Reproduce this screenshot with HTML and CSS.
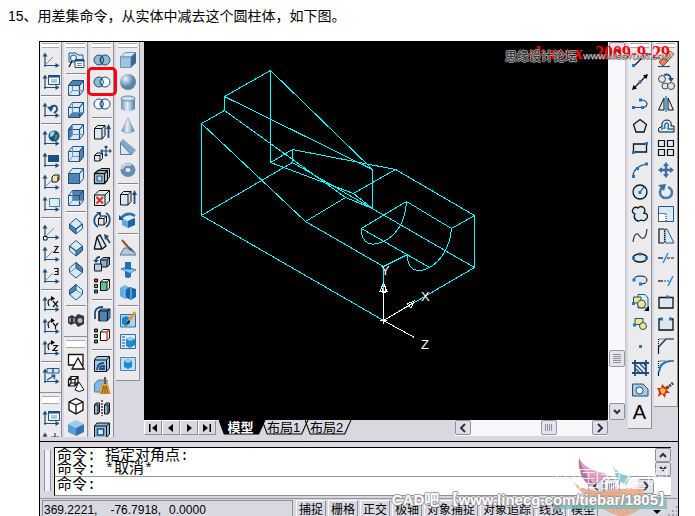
FILE: index.html
```html
<!DOCTYPE html>
<html lang="zh-CN">
<head>
<meta charset="utf-8">
<title>差集命令</title>
<link rel="stylesheet" href="styles.css">
</head>
<body>
<svg class="defs" aria-hidden="true">
  <symbol id="axes" viewBox="0 0 20 20"><path class="n" d="M4 17V5M3 15.500H16"/><path class="nf" d="M4 2.500L6.500 6.500H1.500ZM18.500 15.500L14.500 13V18Z"/></symbol>
  <symbol id="ucs" viewBox="0 0 20 20"><use href="#axes"/><path class="s" d="M5 14L12 7"/></symbol>
  <symbol id="ucs-dialog" viewBox="0 0 20 20"><use href="#axes"/><path fill="#f4f9fc" stroke="#1d4e7e" d="M7.500 3.500H18.500V12.500H7.500Z"/><path class="nf" d="M7 3H19V5.500H7Z"/><path class="s" d="M10 8H16M10 10H16"/></symbol>
  <symbol id="ucs-prev" viewBox="0 0 20 20"><use href="#axes"/><path class="n2" d="M9 9C11 4 17 5 16 10C15 12 14 12 13 13"/><path class="nf" d="M6 7L13 6L10 12Z"/></symbol>
  <symbol id="ucs-world" viewBox="0 0 20 20"><use href="#axes"/><circle class="nf" cx="13" cy="8" r="5.500"/><path fill="#8fd0f4" d="M9 5Q11 2 14 4L12 8L9 9Z"/><path fill="#3a9c52" d="M14 7L17 6L16 11L13 12Z"/></symbol>
  <symbol id="ucs-object" viewBox="0 0 20 20"><use href="#axes"/><path class="nf" d="M7 5H18V12H7Z"/></symbol>
  <symbol id="ucs-face" viewBox="0 0 20 20"><use href="#axes"/><path class="s" d="M5 14L10 9"/><path fill="#f1e5ae" stroke="#111" d="M11 5L13 3H18V8L16 10H11Z"/><path fill="#645b35" d="M16 5L18 3V8L16 10Z"/></symbol>
  <symbol id="ucs-view" viewBox="0 0 20 20"><use href="#axes"/><path fill="#dceef8" stroke="#4c7ba8" d="M8.500 4.500H18.500V12.500H8.500Z"/></symbol>
  <symbol id="ucs-origin" viewBox="0 0 20 20"><use href="#axes"/><path class="s" d="M5 14L13 6"/><path fill="#fff" stroke="#111" d="M2.500 14.500H6V18H2.500Z"/></symbol>
  <symbol id="ucs-z" viewBox="0 0 20 20"><use href="#axes"/><path class="s" d="M5 14L12 7"/><path class="k" d="M13 2.500H17L13 8.500H18"/></symbol>
  <symbol id="ucs-3" viewBox="0 0 20 20"><use href="#axes"/><path class="s" d="M5 14L12 7"/><path class="k" d="M13 2.500H17V8.500H13M14 5.500H17"/></symbol>
  <symbol id="rot" viewBox="0 0 20 20"><use href="#axes"/><path class="k" d="M8 12C6 8 7 5 11 4.500"/><path d="M10 2L14 4.500L10 7Z"/></symbol>
  <symbol id="ucs-rx" viewBox="0 0 20 20"><use href="#rot"/><path class="k" d="M12 7L17 13M17 7L12 13"/></symbol>
  <symbol id="ucs-ry" viewBox="0 0 20 20"><use href="#rot"/><path class="k" d="M12 7L14.500 10L17 7M14.500 10V13"/></symbol>
  <symbol id="ucs-rz" viewBox="0 0 20 20"><use href="#rot"/><path class="k" d="M12 7.500H16.500L12 12.500H17"/></symbol>
  <symbol id="ucs-apply" viewBox="0 0 20 20"><use href="#axes"/><path class="lf" d="M6 2.500H12V7H6ZM12 2.500H18V7H12Z"/><path class="n" d="M6 14L14 9M14 9L10 9M14 9L13 13"/></symbol>
  <symbol id="ucs-move" viewBox="0 0 20 20"><use href="#axes"/><path class="n" d="M14 3V11M10 7H18"/></symbol>

  <symbol id="views" viewBox="0 0 20 20"><path class="lf" d="M3 3H10L12 5H17V12H3Z"/><path class="k" d="M3 17L6 11"/><circle fill="#eef6fb" stroke="#1d4e7e" cx="7.500" cy="8" r="3"/><path fill="#fff" stroke="#1d4e7e" d="M9 9.500H18V17.500H9Z"/><path class="nf" d="M9 9H18V11.500H9Z"/><path class="s" d="M11 13.500H16M11 15.500H16"/></symbol>
  <symbol id="cube" viewBox="0 0 20 20"><path class="lf" d="M2.500 7.500L6.500 2.500H17.500V12.500L13.500 17.500H2.500Z"/></symbol>
  <symbol id="wire" viewBox="0 0 20 20"><path class="n" d="M2.500 7.500H13.500V17.500M13.500 7.500L17.500 2.500"/><path class="s" d="M6.500 2.500V12.500H17.500M6.500 12.500L2.500 17.500"/></symbol>
  <symbol id="v-top" viewBox="0 0 20 20"><use href="#cube"/><use href="#wire"/><path class="df" d="M2.500 7.500L6.500 2.500H17.500L13.500 7.500Z"/></symbol>
  <symbol id="v-bottom" viewBox="0 0 20 20"><use href="#cube"/><path class="df" d="M2.500 17.500L6.500 12.500H17.500L13.500 17.500Z"/><use href="#wire"/></symbol>
  <symbol id="v-left" viewBox="0 0 20 20"><use href="#cube"/><path class="df" d="M2.500 7.500L6.500 2.500V12.500L2.500 17.500Z"/><use href="#wire"/></symbol>
  <symbol id="v-right" viewBox="0 0 20 20"><use href="#cube"/><use href="#wire"/><path class="df" d="M13.500 7.500L17.500 2.500V12.500L13.500 17.500Z"/></symbol>
  <symbol id="v-front" viewBox="0 0 20 20"><use href="#cube"/><path class="df" d="M2.500 7.500H13.500V17.500H2.500Z"/><path class="n" d="M13.500 7.500L17.500 2.500"/></symbol>
  <symbol id="v-back" viewBox="0 0 20 20"><use href="#cube"/><path class="df" d="M6.500 2.500H17.500V12.500H6.500Z"/><use href="#wire"/></symbol>
  <symbol id="iso" viewBox="0 0 20 20"><path class="lf" d="M10 2.500L16.500 8V12.500L10 18L3.500 12.500V8Z"/></symbol>
  <symbol id="iso-sw" viewBox="0 0 20 20"><use href="#iso"/><path class="df" d="M3.500 8L10 13V18L3.500 12.500Z"/><path class="n" d="M10 13L16.500 8"/></symbol>
  <symbol id="iso-se" viewBox="0 0 20 20"><use href="#iso"/><path class="df" d="M16.500 8L10 13V18L16.500 12.500Z"/><path class="n" d="M10 13L3.500 8"/></symbol>
  <symbol id="iso-ne" viewBox="0 0 20 20"><use href="#iso"/><path class="df" d="M10 2.500L16.500 8V12.500L10 8Z"/><path class="s" d="M10 8L3.500 12.500"/></symbol>
  <symbol id="iso-nw" viewBox="0 0 20 20"><use href="#iso"/><path class="df" d="M10 2.500L3.500 8V12.500L10 8Z"/><path class="s" d="M10 8L16.500 12.500"/></symbol>
  <symbol id="camera" viewBox="0 0 20 20"><path fill="#33373d" d="M2 7L6 5L9 7L12 4L18 6V14L12 17L9 13L5 15L2 13Z"/><circle fill="#a9b9c8" cx="14" cy="10.500" r="2.500"/><path stroke="#dfe5ea" d="M4 8V12M8 8V12"/></symbol>
  <symbol id="wf2d" viewBox="0 0 20 20"><path fill="#fff" stroke="#111" stroke-width="1.300" d="M2.500 2.500H17V13H2.500Z"/><path fill="#fff" stroke="#111" stroke-width="1.300" d="M12 6L18 17H6Z"/></symbol>
  <symbol id="wf3d" viewBox="0 0 20 20"><path class="k" d="M2.500 5.500L5 2.500H12V9L9 12H2.500ZM2.500 5.500H9V12M9 5.500L12 2.500M5 2.500V9H12M5 9L2.500 12"/><path fill="#fff" stroke="#111" d="M13 8L18 16Q13 19 9 16Z"/></symbol>
  <symbol id="hidden" viewBox="0 0 20 20"><path fill="#fff" stroke="#111" stroke-width="1.300" d="M10 2.500L17 6V14L10 18L3 14V6ZM3 6L10 9L17 6M10 9V18"/></symbol>
  <symbol id="shade" viewBox="0 0 20 20"><path fill="#9bcbee" d="M10 2L18 6L10 10L2 6Z"/><path fill="#5a9bd0" d="M2 6L10 10V18L2 14Z"/><path fill="#3474ac" d="M18 6L10 10V18L18 14Z"/></symbol>

  <symbol id="union" viewBox="0 0 20 20"><circle class="mf" cx="7" cy="10" r="5"/><circle class="mf" cx="13" cy="10" r="5"/><path class="n" d="M10 6Q7 10 10 14Q13 10 10 6"/></symbol>
  <symbol id="subtract" viewBox="0 0 20 20"><circle class="mf" cx="7" cy="10" r="5"/><circle fill="#fff" stroke="#1d4e7e" cx="13" cy="10" r="5"/><path class="lf" d="M10 6Q7 10 10 14Q13 10 10 6"/></symbol>
  <symbol id="intersect" viewBox="0 0 20 20"><circle fill="#fff" stroke="#1d4e7e" cx="7" cy="10" r="5"/><circle fill="#fff" stroke="#1d4e7e" cx="13" cy="10" r="5"/><path class="mf" d="M10 6Q7 10 10 14Q13 10 10 6"/></symbol>
  <symbol id="kcube" viewBox="0 0 20 20"><path class="kf" d="M2.500 6.500L5.500 3.500H13V13.500L10 17H2.500ZM2.500 6.500H10V17M10 6.500L13 3.500"/></symbol>
  <symbol id="ext" viewBox="0 0 20 20"><use href="#kcube"/><path class="n2" d="M16.500 16V6"/><path class="nf" d="M16.500 2L19 7H14Z"/></symbol>
  <symbol id="movef" viewBox="0 0 20 20"><path class="kf" d="M2.500 11.500L5 9H10.500V14.500L8 17H2.500ZM2.500 11.500H8V17M8 11.500L10.500 9"/><path class="n" d="M14 2V12M9 7H19M12.500 3.500L14 2L15.500 3.500M12.500 10.500L14 12L15.500 10.500M10.500 5.500L9 7L10.500 8.500M17.500 5.500L19 7L17.500 8.500"/></symbol>
  <symbol id="offsetf" viewBox="0 0 20 20"><path class="kf" d="M6.500 5L9 2.500H17.500V11L15 13.500H6.500Z"/><path fill="#c2d9ea" stroke="#111" stroke-width="1.300" d="M2.500 7.500H12.500V17.500H2.500ZM12.500 7.500L15.500 4.500V14L12.500 17.500M2.500 7.500L6 4.500H15.500"/><path class="n" d="M5 10H10V15H5Z"/></symbol>
  <symbol id="delf" viewBox="0 0 20 20"><path class="kf" d="M2.500 7L7 2.500H17.500V13L13 17.500H2.500ZM2.500 7H13V17.500M13 7L17.500 2.500"/><path stroke="#e02b16" stroke-width="2" d="M4.500 9L11 15.500M11 9L4.500 15.500"/></symbol>
  <symbol id="rotf" viewBox="0 0 20 20"><path class="kf" d="M6.500 8.500L9 6H14.500V12L12 15H6.500ZM6.500 8.500H12V15M12 8.500L14.500 6"/><path class="n2" d="M6 17C1 14 1 7 6 4M14 3C19 6 19 13 14 17"/><path class="nf" d="M4 2H9V7Z"/></symbol>
  <symbol id="taper" viewBox="0 0 20 20"><path class="kf" stroke-width="1.300" d="M2.500 16L5 5L8 3L14 14L10 17H2.500ZM5 5L10 17"/><path class="n2" d="M18 11L14 5"/><path class="nf" d="M12 2L17 4L13 8Z"/></symbol>
  <symbol id="copyf" viewBox="0 0 20 20"><path fill="#88acd0" stroke="#111" d="M8.500 6L11 3.500H17.500V11L15 13H8.500ZM8.500 6H15V13M15 6L17.500 3.500"/><path fill="#b5d0e7" stroke="#111" d="M2.500 10H9.500V17H2.500Z"/><path class="n2" d="M4 7Q4 3 8 3"/><path class="nf" d="M1 6H7L4 9Z"/></symbol>
  <symbol id="colorf" viewBox="0 0 20 20"><path fill="#e23b28" stroke="#111" d="M2.500 3H5.500V6H2.500Z"/><path fill="#48d37a" stroke="#111" d="M2.500 8.500H5.500V11.500H2.500Z"/><path fill="#258bd8" stroke="#111" d="M2.500 14H5.500V17H2.500Z"/><path fill="#e4f1ea" stroke="#111" d="M8.500 6L11 3.500H17.500V12L15 14.500H8.500ZM15 6L17.500 3.500"/><path fill="#5fc48c" stroke="#111" d="M8.500 6H15V14.500H8.500Z"/></symbol>
  <symbol id="copye" viewBox="0 0 20 20"><path class="df" d="M7 7L9 5H18V14L15 17H7Z"/><path class="k" d="M7 7H15.500V17M15.500 7L18 5M7 7V17"/><path class="n2" d="M3 15V8Q4 3 11 3"/></symbol>
  <symbol id="colore" viewBox="0 0 20 20"><path fill="#e23b28" stroke="#111" d="M2.500 3H5.500V6H2.500Z"/><path fill="#48d37a" stroke="#111" d="M2.500 8.500H5.500V11.500H2.500Z"/><path fill="#258bd8" stroke="#111" d="M2.500 14H5.500V17H2.500Z"/><path fill="#fff" stroke="#111" d="M8.500 6L11 3.500H17.500V12L15 14.500H8.500ZM8.500 6H15"/><path stroke="#e23b28" stroke-width="1.500" d="M15 6V14.500M15 6L17.500 3.500"/></symbol>
  <symbol id="imprint" viewBox="0 0 20 20"><path fill="#9fcbea" stroke="#111" d="M2.500 6L5 2.500H17.500V14L14.500 17.500H2.500ZM2.500 6H14.500V17.500M14.500 6L17.500 2.500"/><path class="n2" d="M5 16Q5 9 12 9M8 14Q8 12 12 12V15H8Z"/></symbol>
  <symbol id="clean" viewBox="0 0 20 20"><path fill="#82b8e2" stroke="#4c7ba8" d="M2.500 8L6 4H15V16H2.500Z"/><path fill="#8a5421" d="M12 1H14V8H12Z"/><path fill="#e0a23c" d="M10 8H16L19 18H7Z"/><path stroke="#7b491d" d="M11.500 10L10 18M13 10V18M14.500 10L16 18"/></symbol>
  <symbol id="separate" viewBox="0 0 20 20"><path fill="#8fb4d4" stroke="#111" d="M2.500 7L4 5H7.500V14L6 16H2.500ZM12.500 7L14 5H17.500V14L16 16H12.500ZM2.500 7H6V16M12.500 7H16V16"/><path class="k" stroke-dasharray="2 1" d="M10 2V18"/></symbol>
  <symbol id="shell" viewBox="0 0 20 20"><path fill="#8dbadd" stroke="#111" d="M2.500 6L5 3H17.500V14L14.500 17.500H2.500ZM2.500 6H14.500V17.500M14.500 6L17.500 3"/><path fill="#e6f2fa" stroke="#1d4e7e" stroke-width="1.500" d="M5.500 9H11.500V15H5.500Z"/></symbol>

  <linearGradient id="steel"><stop offset="0" stop-color="#6d93b4"/><stop offset=".45" stop-color="#e3f1fa"/><stop offset="1" stop-color="#577d9f"/></linearGradient>
  <radialGradient id="ballfill" cx=".35" cy=".3"><stop offset="0" stop-color="#edf5fb"/><stop offset="1" stop-color="#5784aa"/></radialGradient>
  <symbol id="box" viewBox="0 0 20 20"><path fill="#cfe6f5" stroke="#6a93b5" d="M2.500 7L7 2.500H17.500L13 7Z"/><path fill="#9dc3de" stroke="#6a93b5" d="M2.500 7H13V17.500H2.500Z"/><path fill="#3c6790" d="M13 7L18 2.500V13L13 17.500Z"/></symbol>
  <symbol id="sphere" viewBox="0 0 20 20"><circle fill="url(#ballfill)" cx="10" cy="10" r="8"/></symbol>
  <symbol id="cylinder" viewBox="0 0 20 20"><path fill="url(#steel)" d="M3 4V15Q10 20 17 15V4Z"/><ellipse fill="#c7dfef" stroke="#66859f" cx="10" cy="4.500" rx="7" ry="2.500"/></symbol>
  <symbol id="cone" viewBox="0 0 20 20"><path fill="url(#steel)" stroke="#66859f" stroke-width=".5" d="M10 2L16.500 15Q10 19 3.500 15Z"/></symbol>
  <symbol id="wedge" viewBox="0 0 20 20"><path fill="#81a8c8" d="M2 4L5 1L18 12L14 17H2Z"/><path fill="#d5e8f4" stroke="#557a9a" d="M2.500 5L13 16.500H2.500Z"/></symbol>
  <symbol id="torus" viewBox="0 0 20 20"><ellipse fill="none" stroke="#668eb2" stroke-width="5" cx="10" cy="10" rx="5" ry="4.500"/><path stroke="#c9dfef" stroke-width="2" fill="none" d="M4 9Q6 3 13 5"/></symbol>
  <symbol id="revolve" viewBox="0 0 20 20"><path fill="#5ca9df" d="M4 9L10 11L16 8V15L10 18L4 15Z"/><path fill="#1c64b0" d="M10 11L17 8V15L10 18Z"/><path fill="none" stroke="#2577b8" stroke-width="2.500" d="M3 8Q10 1 17 6"/><path class="nf" d="M1 5V10H6Z"/></symbol>
  <symbol id="slice" viewBox="0 0 20 20"><path fill="#b1c9da" stroke="#557996" d="M2 17L6 10H13L18 17Z"/><path stroke="#a24835" stroke-width="2" d="M4 2L10 9"/><path fill="#4a5565" d="M9 7L18 15L11 12Z"/></symbol>
  <symbol id="section" viewBox="0 0 20 20"><path fill="#6ca9d9" stroke="#3973a4" d="M3 9L9 7L18 10L12 13Z"/><path fill="#1d72ba" d="M7 2H13V17Q10 19 7 17Z"/><path fill="#80c7ef" d="M3 9L18 10L12 13Z"/></symbol>
  <symbol id="interfere" viewBox="0 0 20 20"><path fill="#62ace0" d="M2 6L7 3L12 6V15L7 17L2 14Z"/><path fill="#1668ad" d="M7 8L12 5L18 7V15L13 18L7 15Z"/><path stroke="#9bd2f3" d="M7 3V16M13 6V17"/></symbol>
  <symbol id="drawset" viewBox="0 0 20 20"><path fill="#a6d5f2" stroke="#386b98" d="M2.500 4.500H17.500V17H2.500Z"/><path fill="#1982cf" d="M4 8L8 6L12 8V14L8 16L4 14Z"/><path stroke="#e19732" stroke-width="3" d="M17 2L10 12"/><path d="M11 10L8 14L12 12Z"/></symbol>
  <symbol id="viewset" viewBox="0 0 20 20"><path fill="#d7effc" stroke="#386b98" d="M2.500 2.500H17.500V16.500H2.500Z"/><path class="n" d="M4 5H7M4 8H7M4 11H7M4 14H7"/><path fill="#2189cf" d="M8 7L12 5L17 7V13L12 16L8 14Z"/><path fill="#92cff2" d="M8 7L12 5L17 7L12 9Z"/></symbol>
  <symbol id="profile" viewBox="0 0 20 20"><path fill="#b9e0f5" stroke="#5584ab" d="M2.500 3.500H17.500V16.500H2.500Z"/><path fill="#2189cf" d="M6 7L10 5L14 7V13L10 15L6 13Z"/><path fill="#92cff2" d="M6 7L10 5L14 7L10 9Z"/></symbol>

  <symbol id="line" viewBox="0 0 20 20"><path class="k" d="M4 16L16 4"/><path class="b" d="M2 14H5V17H2ZM15 3H18V6H15Z"/></symbol>
  <symbol id="xline" viewBox="0 0 20 20"><path class="k" d="M4 16L16 4"/><path d="M2 18L3.500 13L7 16.500ZM18 2L13 3.500L16.500 7Z"/><path class="b" d="M8.500 8.500H11.500V11.500H8.500Z"/></symbol>
  <symbol id="pline" viewBox="0 0 20 20"><path class="n" d="M4 13.500H13Q17 13 17 9.500Q16 6 11 6"/><path class="b" d="M2 12H5V15H2ZM11 12H14V15H11ZM9 4.500H12V7.500H9Z"/></symbol>
  <symbol id="polygon" viewBox="0 0 20 20"><path class="kf" stroke-width="1.300" d="M10 3.500L16.500 8.500L14 16H6L3.500 8.500Z"/></symbol>
  <symbol id="rectangle" viewBox="0 0 20 20"><path class="kf" stroke-width="1.300" d="M3.500 6H16.500V14H3.500Z"/><path class="b" d="M2 13H5V16H2ZM15 4H18V7H15Z"/></symbol>
  <symbol id="arc" viewBox="0 0 20 20"><path class="n" d="M3 16Q4 6 17 4"/><path class="b" d="M2 15H5V18H2ZM6 7H9V10H6ZM15 2.500H18V5.500H15Z"/></symbol>
  <symbol id="circle" viewBox="0 0 20 20"><circle class="kf" stroke-width="1.300" cx="10" cy="10" r="7"/><path class="n" d="M10 10L14 5"/><path class="b" d="M8.500 9H11.500V12H8.500Z"/></symbol>
  <symbol id="cloud" viewBox="0 0 20 20"><path class="kf" stroke-width="1.300" d="M5 10Q1 8 3 5Q5 2 8 4Q11 1 14 4Q16 7 14 9Q19 10 17 14Q15 18 11 16Q8 18 6 16Q3 13 5 10Z"/></symbol>
  <symbol id="spline" viewBox="0 0 20 20"><path fill="none" stroke="#333" stroke-width="1.200" d="M3 16Q4 7 8 8Q13 16 16 9L17 3"/></symbol>
  <symbol id="ellipse" viewBox="0 0 20 20"><ellipse class="kf" stroke-width="1.300" cx="10" cy="10" rx="7" ry="4"/><path class="b" d="M2 8.500H5V11.500H2ZM15 8.500H18V11.500H15ZM8.500 4.500H11.500V7.500H8.500Z"/></symbol>
  <symbol id="earc" viewBox="0 0 20 20"><path class="kf" d="M4 10Q4 6 10 6Q17 6 17 10Q17 14 10 14"/><path class="b" d="M2.500 8.500H5.500V11.500H2.500ZM9 12.500H12V15.500H9Z"/></symbol>
  <symbol id="insert" viewBox="0 0 20 20"><path class="lf" d="M8 2.500H15L18 6V16H8Z"/><path fill="#f5e482" stroke="#1d4e7e" d="M3.500 5H11V11H3.500Z"/><circle fill="#f5e482" stroke="#1d4e7e" cx="11.500" cy="12" r="4"/><path class="b" d="M2 10H5V13H2Z"/><path d="M19 14V19H14Z"/></symbol>
  <symbol id="block" viewBox="0 0 20 20"><path fill="#f5e482" stroke="#1d4e7e" d="M5 4.500H13V10.500H5Z"/><circle fill="#f5e482" stroke="#1d4e7e" cx="13" cy="12" r="3.500"/><path class="b" d="M3 9.500H6V12.500H3Z"/></symbol>
  <symbol id="point" viewBox="0 0 20 20"><path class="b" d="M9 9H12V12H9Z"/></symbol>
  <symbol id="hatch" viewBox="0 0 20 20"><path class="n2" d="M5 2V18M16 2V18M2 5H19M2 15H19"/><path class="n" d="M6 7L13 14M6 11L10 15M10 6L16 12M14 6L16 8"/></symbol>
  <symbol id="region" viewBox="0 0 20 20"><path fill="#a9c7df" stroke="#1d4e7e" d="M2.500 4H13L18 9V16H2.500Z"/><circle fill="#eef6fb" stroke="#1d4e7e" cx="9.500" cy="10.500" r="3.500"/></symbol>

  <symbol id="erase" viewBox="0 0 20 20"><path fill="#f1c873" stroke="#7d6841" d="M8 8L14 1L18 4L12 11Z"/><path fill="#eb7d68" stroke="#874537" d="M3 12L8 8L12 11L7 16Z"/><path class="n" d="M2 16.500H14"/></symbol>
  <symbol id="copy" viewBox="0 0 20 20"><circle fill="#dce9f3" stroke="#444" cx="6" cy="7" r="3.500"/><circle fill="#dce9f3" stroke="#444" cx="9" cy="14" r="3"/><circle fill="#dce9f3" stroke="#444" cx="15" cy="14" r="3.500"/><path class="n2" d="M8 3Q14 1 15 7"/><path class="nf" d="M12 6H18L15 10Z"/></symbol>
  <symbol id="mirror" viewBox="0 0 20 20"><path class="kf" d="M8 4V16H2.500ZM12 4V16H17.500Z"/><path stroke="#278edc" stroke-width="1.500" d="M10 2V18"/></symbol>
  <symbol id="offset" viewBox="0 0 20 20"><path class="kf" d="M3 16Q1 11 6 11Q5 4 11 4Q16 4 15 10H18V16Z"/><path fill="#fff" stroke="#1478bb" stroke-width="1.500" d="M6 14Q5 12 9 12Q8 7 11 7Q13 7 12 13H18"/></symbol>
  <symbol id="array" viewBox="0 0 20 20"><path class="kf" stroke-width="1.200" d="M2.500 2.500H8.500V8.500H2.500ZM11.500 2.500H17.500V8.500H11.500ZM2.500 11.500H8.500V17.500H2.500ZM11.500 11.500H17.500V17.500H11.500Z"/></symbol>
  <symbol id="move" viewBox="0 0 20 20"><path class="m2" d="M10 4V16M4 10H16"/><path fill="#3b6e9e" d="M10 2L13 6H7ZM10 18L7 14H13ZM2 10L6 7V13ZM18 10L14 13V7Z"/></symbol>
  <symbol id="rotate" viewBox="0 0 20 20"><path fill="none" stroke="#4c799f" stroke-width="2.500" d="M7 5Q4 7 4 11Q5 16 10 16Q16 16 16 10Q16 7 12 5"/><path fill="#3b6e9e" d="M2 3L10 2L8 9Z"/></symbol>
  <symbol id="scale" viewBox="0 0 20 20"><path class="lf" d="M2.500 2.500H17.500V17.500H2.500Z"/><path fill="#fff" stroke="#111" stroke-dasharray="1 1" d="M2.500 9.500H10V17.500H2.500Z"/></symbol>
  <symbol id="stretch" viewBox="0 0 20 20"><path class="lf" d="M9 3V17H18L11 3Z"/><path class="k" d="M8 3H3V17H8"/><path class="k" stroke-dasharray="1 1" d="M8.500 3V17"/></symbol>
  <symbol id="trim" viewBox="0 0 20 20"><path class="k" d="M2 10H7"/><path stroke="#278edc" stroke-width="1.500" d="M7 15L12 5"/><path class="k" stroke-dasharray="3 1" d="M11 10H18"/></symbol>
  <symbol id="extend" viewBox="0 0 20 20"><path class="k" d="M2 11H7"/><path class="n" stroke-dasharray="2 1" d="M8 11H13"/><path stroke="#278edc" stroke-width="1.500" d="M12 16L17 6"/></symbol>
  <symbol id="breakp" viewBox="0 0 20 20"><path class="kf" stroke-width="1.300" d="M3 5.500H17V16H3Z"/><path class="b" d="M10 3.500H13V6.500H10Z"/></symbol>
  <symbol id="break" viewBox="0 0 20 20"><path class="kf" stroke-width="1.300" d="M5 5H3V16H17V5H15"/><path class="b" d="M4 3.500H7V6.500H4ZM13 3.500H16V6.500H13Z"/></symbol>
  <symbol id="chamfer" viewBox="0 0 20 20"><path class="k" stroke-dasharray="1 1" d="M2.500 10V3H10"/><path class="k" d="M2.500 10V18M10 3H18"/><path class="n2" d="M2.500 11L10 3"/></symbol>
  <symbol id="fillet" viewBox="0 0 20 20"><path class="k" stroke-dasharray="1 1" d="M2.500 10V3H10"/><path class="k" d="M2.500 14V18M13 3H18"/><path fill="none" stroke="#1478bb" stroke-width="2" d="M3 14Q4 4 14 3"/></symbol>
  <symbol id="explode" viewBox="0 0 20 20"><path fill="#d6301d" d="M1 8L5 8L6 4L9 7L13 6L11 10L14 13L10 13L9 18L6 14L2 17L3 12Z"/><path fill="#f7bf3c" d="M4 9L7 8L10 10L8 14L5 13Z"/><path stroke="#444" stroke-width="3" stroke-dasharray="2 1" d="M11 8L17 3"/></symbol>

  <symbol id="up" viewBox="0 0 10 10"><path class="chev" d="M2 7L5 4L8 7"/></symbol>
  <symbol id="down" viewBox="0 0 10 10"><path class="chev" d="M2 3L5 6L8 3"/></symbol>
  <symbol id="prev" viewBox="0 0 10 10"><path class="chev" d="M7 1L3 5L7 9"/></symbol>
  <symbol id="next" viewBox="0 0 10 10"><path class="chev" d="M3 1L7 5L3 9"/></symbol>
</svg>

<h1 class="step">15、用差集命令，从实体中减去这个圆柱体，如下图。</h1>

<main class="app">
  <section class="workspace">
    <div class="dock dock-left">
      <div class="rail rail-first">
        <div class="toolbar">
          <button class="tool" aria-label="UCS"><svg><use href="#ucs"/></svg></button>
          <button class="tool" aria-label="显示 UCS 对话框"><svg><use href="#ucs-dialog"/></svg></button>
          <hr>
          <button class="tool" aria-label="上一个 UCS"><svg><use href="#ucs-prev"/></svg></button>
          <hr>
          <button class="tool" aria-label="世界 UCS"><svg><use href="#ucs-world"/></svg></button>
          <button class="tool" aria-label="对象 UCS"><svg><use href="#ucs-object"/></svg></button>
          <button class="tool" aria-label="面 UCS"><svg><use href="#ucs-face"/></svg></button>
          <button class="tool" aria-label="视图 UCS"><svg><use href="#ucs-view"/></svg></button>
          <hr>
          <button class="tool" aria-label="原点 UCS"><svg><use href="#ucs-origin"/></svg></button>
          <button class="tool" aria-label="Z 轴矢量 UCS"><svg><use href="#ucs-z"/></svg></button>
          <button class="tool" aria-label="三点 UCS"><svg><use href="#ucs-3"/></svg></button>
          <hr>
          <button class="tool" aria-label="X 轴旋转"><svg><use href="#ucs-rx"/></svg></button>
          <button class="tool" aria-label="Y 轴旋转"><svg><use href="#ucs-ry"/></svg></button>
          <button class="tool" aria-label="Z 轴旋转"><svg><use href="#ucs-rz"/></svg></button>
          <hr>
          <button class="tool" aria-label="应用 UCS"><svg><use href="#ucs-apply"/></svg></button>
        </div>
        <div class="toolbar">
          <button class="tool" aria-label="UCS II"><svg><use href="#ucs-dialog"/></svg></button>
          <button class="tool" aria-label="移动 UCS"><svg><use href="#ucs-move"/></svg></button>
        </div>
      </div>
      <div class="rail">
        <div class="toolbar">
          <button class="tool" aria-label="命名视图"><svg><use href="#views"/></svg></button>
          <hr>
          <button class="tool" aria-label="俯视图"><svg><use href="#v-top"/></svg></button>
          <button class="tool" aria-label="仰视图"><svg><use href="#v-bottom"/></svg></button>
          <button class="tool" aria-label="左视图"><svg><use href="#v-left"/></svg></button>
          <button class="tool" aria-label="右视图"><svg><use href="#v-right"/></svg></button>
          <button class="tool" aria-label="主视图"><svg><use href="#v-front"/></svg></button>
          <button class="tool" aria-label="后视图"><svg><use href="#v-back"/></svg></button>
          <hr>
          <button class="tool" aria-label="西南等轴测"><svg><use href="#iso-sw"/></svg></button>
          <button class="tool" aria-label="东南等轴测"><svg><use href="#iso-se"/></svg></button>
          <button class="tool" aria-label="东北等轴测"><svg><use href="#iso-ne"/></svg></button>
          <button class="tool" aria-label="西北等轴测"><svg><use href="#iso-nw"/></svg></button>
          <hr>
          <button class="tool" aria-label="相机"><svg><use href="#camera"/></svg></button>
        </div>
        <div class="toolbar">
          <button class="tool" aria-label="二维线框"><svg><use href="#wf2d"/></svg></button>
          <button class="tool" aria-label="三维线框"><svg><use href="#wf3d"/></svg></button>
          <button class="tool" aria-label="消隐"><svg><use href="#hidden"/></svg></button>
          <button class="tool" aria-label="平面着色"><svg><use href="#shade"/></svg></button>
        </div>
      </div>
      <div class="rail">
        <div class="toolbar">
          <button class="tool" aria-label="并集"><svg><use href="#union"/></svg></button>
          <button class="tool tool-marked" aria-label="差集"><svg><use href="#subtract"/></svg></button>
          <button class="tool" aria-label="交集"><svg><use href="#intersect"/></svg></button>
          <hr>
          <button class="tool" aria-label="拉伸面"><svg><use href="#ext"/></svg></button>
          <button class="tool" aria-label="移动面"><svg><use href="#movef"/></svg></button>
          <button class="tool" aria-label="偏移面"><svg><use href="#offsetf"/></svg></button>
          <button class="tool" aria-label="删除面"><svg><use href="#delf"/></svg></button>
          <button class="tool" aria-label="旋转面"><svg><use href="#rotf"/></svg></button>
          <button class="tool" aria-label="倾斜面"><svg><use href="#taper"/></svg></button>
          <button class="tool" aria-label="复制面"><svg><use href="#copyf"/></svg></button>
          <button class="tool" aria-label="着色面"><svg><use href="#colorf"/></svg></button>
          <hr>
          <button class="tool" aria-label="复制边"><svg><use href="#copye"/></svg></button>
          <button class="tool" aria-label="着色边"><svg><use href="#colore"/></svg></button>
          <hr>
          <button class="tool" aria-label="压印"><svg><use href="#imprint"/></svg></button>
          <button class="tool" aria-label="清除"><svg><use href="#clean"/></svg></button>
          <button class="tool" aria-label="分割"><svg><use href="#separate"/></svg></button>
          <button class="tool" aria-label="抽壳"><svg><use href="#shell"/></svg></button>
        </div>
      </div>
      <div class="rail">
        <div class="toolbar">
          <button class="tool" aria-label="长方体"><svg><use href="#box"/></svg></button>
          <button class="tool" aria-label="球体"><svg><use href="#sphere"/></svg></button>
          <button class="tool" aria-label="圆柱体"><svg><use href="#cylinder"/></svg></button>
          <button class="tool" aria-label="圆锥体"><svg><use href="#cone"/></svg></button>
          <button class="tool" aria-label="楔体"><svg><use href="#wedge"/></svg></button>
          <button class="tool" aria-label="圆环"><svg><use href="#torus"/></svg></button>
          <hr>
          <button class="tool" aria-label="拉伸"><svg><use href="#ext"/></svg></button>
          <button class="tool" aria-label="旋转"><svg><use href="#revolve"/></svg></button>
          <hr>
          <button class="tool" aria-label="剖切"><svg><use href="#slice"/></svg></button>
          <button class="tool" aria-label="切割"><svg><use href="#section"/></svg></button>
          <button class="tool" aria-label="干涉"><svg><use href="#interfere"/></svg></button>
          <hr>
          <button class="tool" aria-label="设置图形"><svg><use href="#drawset"/></svg></button>
          <button class="tool" aria-label="设置视图"><svg><use href="#viewset"/></svg></button>
          <button class="tool" aria-label="设置轮廓"><svg><use href="#profile"/></svg></button>
        </div>
      </div>
    </div>

    <div class="pane">
      <svg class="canvas" viewBox="144 42 464 378" preserveAspectRatio="xMidYMid slice" role="img" aria-label="实体线框">
        <g class="solid">
          <path d="M270.500 70.500L224.500 96.500V110.500L201.500 123.500V215.500L383.500 320.500L474.500 267.500V215.500L395.500 169.500L292.500 149.500L270.500 162.500V70.500L372.500 169.500V208.500"/>
          <path d="M224.500 96.500L372.500 169.500M224.500 110.500L345.500 197.500L372.500 208.500M201.500 123.500L305.500 221.500L383.500 266.500V320.500M201.500 215.500L292.500 162.500V149.500M292.500 162.500L474.500 267.500M270.500 162.500L353.500 193.500L372.500 208.500M353.500 193.500L395.500 169.500M305.500 221.500L345.500 197.500"/>
          <path d="M361.500 228.500L406.500 201.500L451.500 228.500L474.500 215.500M361.500 228.500L429.500 267.500M383.500 266.500L407.500 254.500"/>
          <path d="M406.500 201.500C405.500 222 396 236 383 241.500C372 247 361 244 361.500 228.500M451.500 228.500C450 247 441 261 429.500 267.500C417 274 407 270 407.500 254.500"/>
        </g>
        <g class="ucs">
          <path d="M383.500 290V324M380 320.500H387M383.500 320.500L414.500 337.500M383.500 320.500L413 303M380 291L383.500 283L387 291ZM407 304L414 301L411 308ZM382 288V292H385V288"/>
        </g>
        <text class="axis" x="381" y="275">Y</text>
        <text class="axis" x="421" y="301">X</text>
        <text class="axis" x="421" y="349">Z</text>
      </svg>
      <div class="vscroll">
        <button class="sbtn" aria-label="向上"><svg><use href="#up"/></svg></button>
        <span class="space-long"></span>
        <span class="thumb thumb-v"></span>
        <span class="space-short"></span>
        <button class="sbtn" aria-label="向下"><svg><use href="#down"/></svg></button>
      </div>
      <div class="sheetbar">
        <div class="navs">
          <button aria-label="第一个"><svg viewBox="0 0 12 10"><path d="M2 1H3.500V9H2ZM10 1V9L5 5Z"/></svg></button>
          <button aria-label="前一个"><svg viewBox="0 0 12 10"><path d="M8 1V9L3 5Z"/></svg></button>
          <button aria-label="后一个"><svg viewBox="0 0 12 10"><path d="M4 1V9L9 5Z"/></svg></button>
          <button aria-label="最后一个"><svg viewBox="0 0 12 10"><path d="M2 1V9L7 5ZM8.500 1H10V9H8.500Z"/></svg></button>
        </div>
        <div class="sheets">
          <button class="sheet sheet-on"><svg viewBox="0 0 45 15" preserveAspectRatio="none"><path d="M0 0L5 14H38L44 0"/></svg><span>模型</span></button>
          <button class="sheet"><svg viewBox="0 0 45 15" preserveAspectRatio="none"><path d="M0 0L5 14H38L44 0"/></svg><span>布局1</span></button>
          <button class="sheet"><svg viewBox="0 0 45 15" preserveAspectRatio="none"><path d="M0 0L5 14H38L44 0"/></svg><span>布局2</span></button>
        </div>
        <div class="hscroll">
          <button class="sbtn" aria-label="向左"><svg><use href="#prev"/></svg></button>
          <span class="space-long"></span>
          <span class="thumb"></span>
          <span class="space-mid"></span>
          <button class="sbtn" aria-label="向右"><svg><use href="#next"/></svg></button>
        </div>
      </div>
    </div>

    <div class="dock">
      <div class="rail">
        <div class="toolbar">
          <button class="tool" aria-label="直线"><svg><use href="#line"/></svg></button>
          <button class="tool" aria-label="构造线"><svg><use href="#xline"/></svg></button>
          <button class="tool" aria-label="多段线"><svg><use href="#pline"/></svg></button>
          <button class="tool" aria-label="正多边形"><svg><use href="#polygon"/></svg></button>
          <button class="tool" aria-label="矩形"><svg><use href="#rectangle"/></svg></button>
          <button class="tool" aria-label="圆弧"><svg><use href="#arc"/></svg></button>
          <button class="tool" aria-label="圆"><svg><use href="#circle"/></svg></button>
          <button class="tool" aria-label="修订云线"><svg><use href="#cloud"/></svg></button>
          <button class="tool" aria-label="样条曲线"><svg><use href="#spline"/></svg></button>
          <button class="tool" aria-label="椭圆"><svg><use href="#ellipse"/></svg></button>
          <button class="tool" aria-label="椭圆弧"><svg><use href="#earc"/></svg></button>
          <button class="tool" aria-label="插入块"><svg><use href="#insert"/></svg></button>
          <button class="tool" aria-label="创建块"><svg><use href="#block"/></svg></button>
          <button class="tool" aria-label="点"><svg><use href="#point"/></svg></button>
          <button class="tool" aria-label="图案填充"><svg><use href="#hatch"/></svg></button>
          <button class="tool" aria-label="面域"><svg><use href="#region"/></svg></button>
          <button class="tool tool-text" aria-label="多行文字">A</button>
        </div>
      </div>
      <div class="rail">
        <div class="toolbar">
          <button class="tool" aria-label="删除"><svg><use href="#erase"/></svg></button>
          <button class="tool" aria-label="复制"><svg><use href="#copy"/></svg></button>
          <button class="tool" aria-label="镜像"><svg><use href="#mirror"/></svg></button>
          <button class="tool" aria-label="偏移"><svg><use href="#offset"/></svg></button>
          <button class="tool" aria-label="阵列"><svg><use href="#array"/></svg></button>
          <button class="tool" aria-label="移动"><svg><use href="#move"/></svg></button>
          <button class="tool" aria-label="旋转"><svg><use href="#rotate"/></svg></button>
          <button class="tool" aria-label="缩放"><svg><use href="#scale"/></svg></button>
          <button class="tool" aria-label="拉伸"><svg><use href="#stretch"/></svg></button>
          <button class="tool" aria-label="修剪"><svg><use href="#trim"/></svg></button>
          <button class="tool" aria-label="延伸"><svg><use href="#extend"/></svg></button>
          <button class="tool" aria-label="打断于点"><svg><use href="#breakp"/></svg></button>
          <button class="tool" aria-label="打断"><svg><use href="#break"/></svg></button>
          <button class="tool" aria-label="倒角"><svg><use href="#chamfer"/></svg></button>
          <button class="tool" aria-label="圆角"><svg><use href="#fillet"/></svg></button>
          <button class="tool" aria-label="分解"><svg><use href="#explode"/></svg></button>
        </div>
      </div>
    </div>
  </section>

  <section class="command">
    <span class="handle"></span>
    <div class="console">
      <div class="history">
        <div class="log"><p>命令: 指定对角点:</p><p>命令: *取消*</p></div>
        <div class="history-scroll">
          <button class="sbtn" aria-label="向上"><svg><use href="#up"/></svg></button>
          <button class="sbtn" aria-label="向下"><svg><use href="#down"/></svg></button>
        </div>
      </div>
      <div class="prompt">
        <label for="cmd">命令:</label><input id="cmd" type="text">
        <div class="prompt-scroll">
          <button class="sbtn" aria-label="向左"><svg><use href="#prev"/></svg></button>
          <span class="thumb"></span>
          <span class="space-long"></span>
          <button class="sbtn" aria-label="向右"><svg><use href="#next"/></svg></button>
        </div>
      </div>
    </div>
  </section>

  <footer class="status">
    <div class="coords"><span>369.2221,</span><span class="gap-wide">-76.7918,</span><span>0.0000</span></div>
    <button>捕捉</button><button>栅格</button><button>正交</button><button>极轴</button><button>对象捕捉</button><button>对象追踪</button><button>线宽</button><button>模型</button>
    <svg class="tray" viewBox="0 0 26 14"><path d="M1 7H9L5 11Z"/><path stroke="#a3a2ae" stroke-width="2" stroke-dasharray="2 2" d="M16 12H25M20 8H25M24 4H26"/></svg>
  </footer>

  <div class="stamp"><span>shaonx</span><span>2009-9-29</span></div>
  <div class="forum"><span>思缘设计论坛</span><span class="forum-url">WWW.MISSYUAN.COM</span></div>
  <svg class="logo" viewBox="0 0 120 61" aria-hidden="true">
    <path fill="#dd8fb9" opacity=".85" d="M29 2Q36 15 58 18Q48 30 39 30Q28 20 29 2Z"/>
    <path fill="#9a668b" opacity=".7" d="M29 2Q33 18 46 28L38 28Q27 18 29 2Z"/>
    <path fill="#7cc4cb" opacity=".85" d="M63 10Q69 20 82 20L76 29Q65 25 63 10Z"/>
    <path fill="#e8a680" opacity=".85" d="M19 19Q23 32 47 35L94 31L92 51Q85 58 72 61Q37 51 19 19Z"/>
    <path fill="#74bec2" opacity=".8" d="M3 41H22L30 47H66L84 41H117V53H3Z"/>
  </svg>
  <div class="school">中国教程网</div>
  <div class="link">CAD吧 【www.linecg.com/tiebar/1805】</div>
</main>
</body>
</html>
```
FILE: styles.css
```css
* { box-sizing: border-box; }

body {
  margin: 0;
  background: #fff;
  color: #000;
  font-family: "Liberation Sans", "Noto Sans CJK SC", sans-serif;
  overflow: hidden;
}

button {
  margin: 0;
  padding: 0;
  border: 0;
  background: none;
  color: inherit;
  font: inherit;
}

p { margin: 0; }
.defs { position: absolute; width: 0; height: 0; }

.step {
  margin: 0 8px 9px;
  font-size: 14px;
  font-weight: 400;
  line-height: 32px;
}

.app {
  position: relative;
  margin: 0 16px 0 39px;
  border: 1px solid #000;
  border-bottom: 0;
  background: #d9d8e0;
  overflow: hidden;
}

/* workspace */
.workspace { display: flex; height: 395px; overflow: hidden; }
.dock { display: flex; gap: 2px; }
.dock-left { padding-right: 4px; }
.rail { width: 24px; }
.rail-first { width: 22px; }

.toolbar {
  display: flex;
  flex-direction: column;
  padding-bottom: 5px;
  background: #ebebee;
  border-right: 1px solid #8e8e98;
  border-bottom: 1px solid #8e8e98;
}
.toolbar::before {
  content: "";
  height: 3px;
  margin: 1px 2px;
  border: solid #a9a9b2;
  border-width: 1px 0;
  background: #fff;
}
.toolbar + .toolbar::before { height: 6px; margin: 3px 2px; }
.toolbar hr {
  width: 20px;
  height: 2px;
  margin: 2px auto;
  border: 0;
  border-top: 1px solid #85858f;
  background: #fff;
}
.tool { position: relative; height: 22px; display: flex; align-items: center; justify-content: center; }
.tool svg { width: 20px; height: 20px; flex: none; }
.tool-text { font-size: 20px; line-height: 22px; }
.tool-marked::after {
  content: "";
  position: absolute;
  inset: -4px -4px -3px -3px;
  border: 3px solid #fb0014;
  border-radius: 5px;
}

/* icon strokes */
.n { fill: none; stroke: #1d4e7e; stroke-width: 1.2; }
.n2 { fill: none; stroke: #1d4e7e; stroke-width: 1.8; }
.m2 { fill: none; stroke: #3b6e9e; stroke-width: 2.4; }
.nf { fill: #1d4e7e; }
.s { fill: none; stroke: #6c91b3; }
.k { fill: none; stroke: #111; stroke-width: 1.2; }
.lf { fill: #d8e9f4; stroke: #1d5c8e; }
.mf { fill: #94bace; stroke: #1d4e7e; }
.df { fill: #5384b1; stroke: #1d4e7e; }
.kf { fill: #dce8f1; stroke: #111; }
.b { fill: #1779c7; }
.chev { fill: none; stroke: #30303a; stroke-width: 2; }

/* drawing pane */
.pane {
  flex: 1;
  min-width: 0;
  display: grid;
  grid-template: 378px 16px / minmax(0, 1fr) 18px;
  margin-right: 2px;
  align-content: start;
}
.canvas { width: 100%; height: 100%; background: #000; }
.solid { fill: none; stroke: #0ff; shape-rendering: crispEdges; }
.ucs { fill: none; stroke: #fff; shape-rendering: crispEdges; }
.axis { fill: #fff; font-size: 13px; }

.vscroll, .hscroll, .prompt-scroll, .history-scroll { display: flex; background: #f8f8fb; }
.vscroll { flex-direction: column; padding: 0 1px; border-right: 1px solid #c6c6d0; }
.sbtn {
  flex: none;
  width: 16px;
  height: 15px;
  display: grid;
  place-items: center;
  border: 1px solid #8f8f9d;
  border-radius: 2px;
  background: #dfdfea;
}
.sbtn svg { width: 10px; height: 10px; }
.vscroll .sbtn { height: 17px; }
.space-long { flex: 6; }
.space-short { flex: 1; }
.space-mid { flex: 3; }
.vscroll .space-long { flex: 8; }
.thumb {
  flex: none;
  width: 16px;
  height: 15px;
  border: 1px solid #9696a4;
  border-radius: 2px;
  padding: 3px;
  background: repeating-linear-gradient(90deg, #8f8f9f 0 1px, #e4e4ee 1px 2px) content-box, #e4e4ee;
}
.thumb-v { height: 17px; background: repeating-linear-gradient(#8f8f9f 0 1px, #e4e4ee 1px 2px) content-box, #e4e4ee; }

.sheetbar { display: flex; grid-column: 1 / 2; }
.navs { display: flex; }
.navs button {
  width: 18px;
  height: 15px;
  display: grid;
  place-items: center;
  border: 1px solid #fff;
  border-right-color: #8f8f9a;
  border-bottom-color: #8f8f9a;
}
.navs svg { width: 12px; height: 10px; }
.sheets { display: flex; padding-left: 3px; }
.sheet { position: relative; width: 43px; height: 15px; font-size: 13px; line-height: 13px; white-space: nowrap; }
.sheet svg { position: absolute; left: 0; top: 0; width: 47px; height: 15px; fill: none; stroke: #000; }
.sheet span { position: relative; }
.sheet-on { color: #fff; font-weight: 700; }
.sheet-on svg { fill: #000; }
.hscroll { width: 153px; margin-left: auto; }

/* command window */
.command {
  display: flex;
  margin-top: 4px;
  padding: 5px 7px 2px 4px;
  border-top: 1px solid #000;
}
.handle {
  width: 7px;
  margin: 3px 3px 5px 0;
  border: solid #92929e;
  border-width: 0 1px;
  background: #f2f2f6;
}
.console {
  flex: 1;
  min-width: 0;
  border: solid #000;
  border-width: 1px 0 0 1px;
  border-bottom: 1px solid #8e8e98;
  background: #fff;
  font-family: "Liberation Mono", "Noto Sans CJK SC", monospace;
  font-size: 15px;
}
.history { display: flex; justify-content: space-between; height: 29px; border-bottom: 1px solid #999; }
.log { padding: 2px 0 0 2px; line-height: 13px; }
.history-scroll { flex-direction: column; }
.history-scroll .sbtn { height: 14px; }
.prompt { display: flex; align-items: center; padding-left: 2px; height: 18px; line-height: 20px; }
.prompt input { flex: 1; min-width: 0; height: 14px; border: 0; padding: 0; outline: 0; font: inherit; }
.prompt-scroll { width: 66px; margin-right: 17px; }

/* status bar */
.status { display: flex; gap: 2px; padding: 1px 0 0 2px; height: 19px; border-top: 1px solid #92929e; font-size: 12px; }
.status button {
  padding: 0 2px;
  border: 1px solid #fff;
  border-right-color: #8e8e98;
  border-bottom: 0;
  line-height: 18px;
  white-space: nowrap;
}
.coords {
  flex: 1;
  display: flex;
  gap: 8px;
  min-width: 207px;
  margin-right: 1px;
  padding-left: 1px;
  border: solid #8e8e98;
  border-width: 1px 1px 0;
  line-height: 18px;
}
.gap-wide { margin-left: 5px; }
.tray { width: 26px; height: 14px; margin: 3px 0 0 52px; }

/* watermarks laid over the window */
.stamp {
  position: absolute;
  top: 1px;
  right: 8px;
  display: flex;
  gap: 12px;
  color: #f00;
  font: 700 18px/20px "Liberation Serif", serif;
}
.forum {
  position: absolute;
  top: 8px;
  right: 8px;
  display: flex;
  gap: 6px;
  align-items: center;
  color: #222;
  font-size: 12px;
  line-height: 14px;
  text-shadow: 1px 0 #aaa, -1px 0 #aaa, 0 1px #aaa, 0 -1px #aaa;
}
.forum-url { color: #ddd; font-size: 8px; text-shadow: 1px 0 #555, 0 1px #555; }
.logo { position: absolute; right: 8px; bottom: 0; width: 120px; height: 61px; }
.school {
  position: absolute;
  right: 9px;
  bottom: 25px;
  color: #fff;
  font-size: 23px;
  font-weight: 300;
  line-height: 26px;
  opacity: .8;
}
.link {
  position: absolute;
  right: 5px;
  bottom: 7px;
  color: #fff;
  font-size: 15px;
  font-weight: 700;
  line-height: 20px;
  white-space: nowrap;
  text-shadow: 1px 0 #999, -1px 0 #999, 0 1px #999, 0 -1px #999;
}
```
